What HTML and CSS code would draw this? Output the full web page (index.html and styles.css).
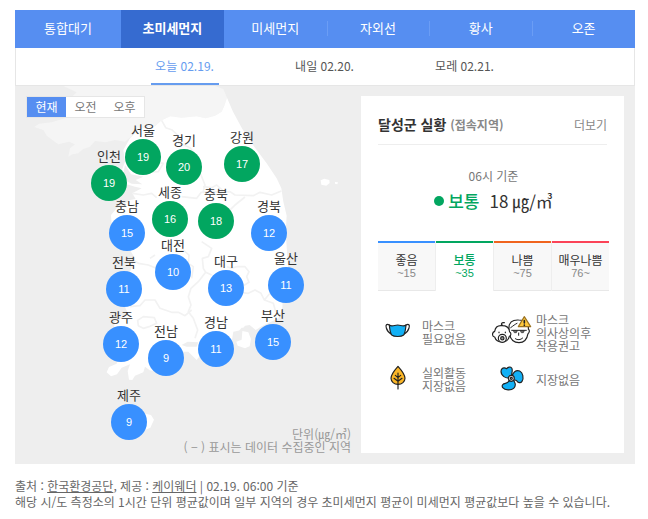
FILE: index.html
```html
<!DOCTYPE html>
<html lang="ko">
<head>
<meta charset="utf-8">
<meta name="viewport" content="width=device-width, initial-scale=1">
<title>초미세먼지</title>
<link rel="stylesheet" href="styles.css">
</head>
<body>
<main class="air">
  <nav class="tabs">
    <a class="tab" href="#all">통합대기</a>
    <a class="tab is-active" href="#pm25" aria-current="page">초미세먼지</a>
    <a class="tab" href="#pm10">미세먼지</a>
    <a class="tab divided" href="#uv">자외선</a>
    <a class="tab divided" href="#dust">황사</a>
    <a class="tab divided" href="#ozone">오존</a>
  </nav>
  <nav class="days">
    <a class="day is-active" href="#today">오늘 02.19.</a>
    <a class="day" href="#tomorrow">내일 02.20.</a>
    <a class="day" href="#after">모레 02.21.</a>
  </nav>

  <div class="board">
    <section class="map">
      <svg class="land" width="346" height="378" viewBox="0 3 1038 1134" aria-hidden="true">
        <path fill="#f5f5f5" d="M145 3H600L625 12L636 38L628 62L620 80L600 92L572 100L545 94L500 98L466 94L440 106L420 124L395 125L370 135L348 155L330 170L300 165L272 172L240 168L225 185L205 192L190 205L172 208L160 215L165 190L180 178L162 170L130 178L112 165L95 152L85 135L58 126L72 116L110 112L150 100L178 75L160 45L185 22Z"/>
        <path fill="#fff" d="M636 38L654 80L682 132L720 188L755 235L785 280L799 310L805 350L815 392L812 440L816 500L820 560L805 600L802 670L790 700L740 724L722 735L704 720L690 722L680 735L655 740L650 770L610 790L560 805L545 825L520 800L500 800L482 770L468 830L430 860L404 856L390 845L385 862L360 872L352 885L342 884L338 858L345 838L320 848L306 868L288 874L275 862L282 846L305 836L310 800L290 770L300 710L340 690L330 665L310 640L325 590L345 560L360 520L345 495L310 470L290 420L288 390L305 370L325 360L345 345L362 342L352 325L380 310L360 305L330 296L315 270L330 230L325 195L345 160L370 135L395 125L420 124L440 106L466 94L500 98L545 94L572 100L600 92L620 80L628 62Z"/>
        <path fill="#eee" d="M330 240L348 268L385 275L362 285L382 298L350 296L322 282ZM655 745L672 738L680 728L698 728L706 742L694 755L675 752L662 765ZM500 780L518 770L550 772L545 785L515 785Z"/>
        <path fill="#fff" d="M682 738L700 742L708 762L704 784L690 790L668 782L664 770L680 764ZM390 986L408 990L417 1004L406 1028L388 1036ZM917 286L928 281L943 285L944 294L934 302L919 299ZM960 291L969 292L967 298L960 296Z"/>
        <g fill="none" stroke="#f2f2f2" stroke-width="5" stroke-linejoin="round">
          <path d="M440 106L452 128L470 134L488 150L492 174L525 188L538 205L530 240L558 270L570 300L564 322L590 318L612 322L645 320L660 330L715 332L735 322L770 330L799 318"/>
          <path d="M564 305L590 308L605 300L622 315L615 330M352 325L385 330L410 325L425 338M500 335L545 340L560 320M690 336L660 360L640 380M560 470L590 490L580 515L562 520L565 550L572 562L550 590L528 610L520 635L528 660L520 680L535 700L548 735L540 760"/>
          <path d="M345 520L370 535L400 540L420 548L430 535M572 562L590 570M636 545L650 550L665 545L690 545L702 560L695 575L702 592L685 602L672 622L700 625L720 615L738 625L748 645L775 655L782 680M748 645L765 625L790 632M345 665L375 662L390 645L420 645L435 670L470 682L490 682L510 692L530 675M368 706L385 695L418 698L425 715L405 724L385 730L370 722ZM480 500L505 495L522 510L520 535L535 545L530 580M405 520L420 510M330 220L360 250L375 262L430 260L445 235L415 230"/>
        </g>
      </svg>

      <div class="periods">
        <button class="period is-active" type="button">현재</button>
        <button class="period" type="button">오전</button>
        <button class="period" type="button">오후</button>
      </div>

      <ul class="cities">
        <li class="city normal-level seoul">서울<b class="value">19</b></li>
        <li class="city normal-level gyeonggi">경기<b class="value">20</b></li>
        <li class="city normal-level gangwon">강원<b class="value">17</b></li>
        <li class="city normal-level incheon">인천<b class="value">19</b></li>
        <li class="city normal-level sejong">세종<b class="value">16</b></li>
        <li class="city normal-level chungbuk">충북<b class="value">18</b></li>
        <li class="city chungnam">충남<b class="value">15</b></li>
        <li class="city gyeongbuk">경북<b class="value">12</b></li>
        <li class="city daejeon">대전<b class="value">10</b></li>
        <li class="city daegu">대구<b class="value">13</b></li>
        <li class="city ulsan">울산<b class="value">11</b></li>
        <li class="city jeonbuk">전북<b class="value">11</b></li>
        <li class="city gwangju">광주<b class="value">12</b></li>
        <li class="city jeonnam">전남<b class="value">9</b></li>
        <li class="city gyeongnam">경남<b class="value">11</b></li>
        <li class="city busan">부산<b class="value">15</b></li>
        <li class="city jeju">제주<b class="value">9</b></li>
      </ul>

      <p class="note">단위(㎍/㎥)<br>( − ) 표시는 데이터 수집중인 지역</p>
    </section>

    <section class="card">
      <header class="card-head">
        <h2 class="place">달성군 실황 <span class="here">(접속지역)</span></h2>
        <a class="more" href="#more">더보기</a>
      </header>
      <p class="time">06시 기준</p>
      <p class="status"><span class="dot"></span><strong class="grade">보통</strong><span>18 ㎍/㎥</span></p>

      <ul class="tiers">
        <li class="tier low">좋음<span class="range">~15</span></li>
        <li class="tier normal is-active">보통<span class="range">~35</span></li>
        <li class="tier bad">나쁨<span class="range">~75</span></li>
        <li class="tier worst">매우나쁨<span class="range">76~</span></li>
      </ul>

      <ul class="tips">
        <li class="tip">
          <svg class="icon" viewBox="24 36 120 120" aria-hidden="true">
            <g fill="none" stroke="#222" stroke-width="3.5" stroke-linejoin="round" stroke-linecap="round">
              <path d="M58 75C50 70 46 75 49 84C51 93 57 98 64 103M108 75C116 70 120 75 117 84C115 93 109 98 102 103"/>
              <path fill="#12b0f5" d="M58 75C65 81 74 75 83 75C92 75 101 81 108 75C107 88 105 98 101 105C94 111 72 111 65 105C61 98 59 88 58 75Z"/>
            </g>
          </svg>
          <span>마스크<br>필요없음</span>
        </li>
        <li class="tip">
          <svg class="icon" viewBox="21 36 120 120" aria-hidden="true">
            <g fill="#fff" stroke="#222" stroke-width="3.5" stroke-linejoin="round" stroke-linecap="round">
              <path d="M72 89C70 66 82 59 101 60C121 60 132 70 130 88C135 90 133 99 129 101C126 119 115 128 102 128C88 128 77 119 74 104"/>
              <path fill="none" stroke-width="3" d="M77 83C84 78 91 72 96 70M80 91H124M91 116C97 121 107 120 113 114M101 99V106"/>
              <path fill="#777" stroke-width="2" d="M86 92H97L94 98H89ZM107 92H118L115 98H110Z"/>
              <path d="M29 94C31 81 41 76 51 77C64 77 73 84 74 96C79 98 79 107 73 109C70 121 62 126 51 126C40 126 32 120 29 111C21 110 20 97 29 94Z"/>
              <path fill="none" d="M53 76C47 74 48 67 58 68M42 96V98M61 96V98"/>
              <circle cx="52" cy="115" r="12"/>
              <circle cx="52" cy="115" r="5" fill="#999"/>
              <path fill="#ffc83c" stroke="#9b7220" d="M118 50L137 80H100Z"/>
              <path fill="none" stroke-width="5" d="M118 62V69M118 75V75.5"/>
            </g>
          </svg>
          <span>마스크<br>의사상의후<br>착용권고</span>
        </li>
        <li class="tip">
          <svg class="icon" viewBox="24 177 120 120" aria-hidden="true">
            <g fill="none" stroke="#222" stroke-width="3.5" stroke-linejoin="round" stroke-linecap="round">
              <path fill="#fbb627" d="M84 199C94 210 105 224 105 235C105 245 96 253 84 253C72 253 63 245 63 235C63 224 74 210 84 199Z"/>
              <path d="M84 219V267M84 233L76 226M84 233L92 226M84 244L72 235M84 244L96 235"/>
            </g>
          </svg>
          <span>실외활동<br>지장없음</span>
        </li>
        <li class="tip">
          <svg class="icon" viewBox="21 177 120 120" aria-hidden="true">
            <g fill="#12b0f5" stroke="#222" stroke-width="3.5" stroke-linejoin="round">
              <path d="M75 233C62 237 48 227 48 214C48 204 57 201 65 206C69 201 76 199 80 204C85 211 78 222 80 230Z"/>
              <path d="M82 230C82 217 93 209 104 213C114 218 117 234 111 244C107 251 98 248 95 242C91 238 85 242 81 237Z"/>
              <path d="M80 238C92 243 94 258 86 265C78 272 60 271 53 263C49 256 54 251 61 250C70 249 72 243 77 238Z"/>
              <circle cx="79" cy="235" r="9" fill="#ddd"/>
              <circle cx="79" cy="235" r="3" fill="#fff"/>
            </g>
          </svg>
          <span>지장없음</span>
        </li>
      </ul>
    </section>
  </div>

  <footer class="source">
    출처 : <a href="#keco">한국환경공단</a>, 제공 : <a href="#kweather">케이웨더</a> | 02.19. 06:00 기준<br>
    해당 시/도 측정소의 1시간 단위 평균값이며 일부 지역의 경우 초미세먼지 평균이 미세먼지 평균값보다 높을 수 있습니다.
  </footer>
</main>
</body>
</html>
```
FILE: styles.css
```css
* { box-sizing: border-box; }

body {
  margin: 0;
  background: #fff;
  color: #333;
  font: 13px/16px "Noto Sans CJK KR", sans-serif;
}

a { color: inherit; text-decoration: none; }
ul { margin: 0; padding: 0; list-style: none; }
p, h2 { margin: 0; }

.air { padding: 10px 13px 0 15px; }

.tabs { display: flex; background: #568ef1; color: #fff; }
.tab {
  position: relative;
  flex: 1;
  height: 38px;
  line-height: 36px;
  text-align: center;
}
.tab:first-child { flex: 0 0 106px; }
.tab.is-active { background: #366bd0; font-weight: 700; }
.tab.divided::before {
  content: "";
  position: absolute;
  left: 0;
  top: 11px;
  width: 1px;
  height: 15px;
  background: #6b9df5;
}

.days {
  display: flex;
  justify-content: center;
  gap: 72px;
  padding-right: 1px;
  border: 1px solid #e6e6e6;
  border-top: 0;
  font-size: 12px;
  color: #555;
}
.day {
  width: 68px;
  height: 37px;
  line-height: 36px;
  text-align: center;
  white-space: nowrap;
}
.day.is-active { border-bottom: 2px solid #669cef; color: #669cef; }

.board { display: flex; background: #eee; }
.map {
  position: relative;
  flex: 1;
  display: flex;
  flex-direction: column;
  align-items: flex-start;
  min-width: 346px;
  padding: 10px;
}
.land { position: absolute; left: 0; top: 0; }

.periods {
  position: relative;
  display: flex;
  margin-left: 1px;
  border: 1px solid #e6e6e6;
  background: #fff;
}
.period {
  width: 39px;
  height: 20px;
  padding: 0;
  border: 0;
  background: none;
  color: #777;
  font: 12px/16px "Noto Sans CJK KR", sans-serif;
}
.period.is-active { background: #568ef1; color: #fff; }

.city {
  position: absolute;
  width: 36px;
  line-height: 18px;
  text-align: center;
}
.value {
  display: block;
  border-radius: 50%;
  background: #3890ff;
  color: #fff;
  font: 11px/36px "Liberation Sans", sans-serif;
}
.normal-level .value { background: #02a660; }

.seoul { left: 110px; top: 35px; }
.gyeonggi { left: 151px; top: 45px; }
.gangwon { left: 209px; top: 42px; }
.incheon { left: 76px; top: 61px; }
.sejong { left: 137px; top: 97px; }
.chungbuk { left: 183px; top: 99px; }
.chungnam { left: 94px; top: 111px; }
.gyeongbuk { left: 236px; top: 111px; }
.daejeon { left: 140px; top: 150px; }
.daegu { left: 193px; top: 166px; }
.ulsan { left: 253px; top: 163px; }
.jeonbuk { left: 91px; top: 167px; }
.gwangju { left: 88px; top: 222px; }
.jeonnam { left: 133px; top: 236px; }
.gyeongnam { left: 183px; top: 227px; }
.busan { left: 240px; top: 220px; }
.jeju { left: 96px; top: 300px; }

.map .note {
  position: relative;
  margin-top: auto;
  align-self: flex-end;
  padding-bottom: 1px;
  color: #999;
  font-size: 12px;
  line-height: 13px;
  text-align: right;
}

.card {
  width: 263px;
  margin: 10px 11px 11px 0;
  padding: 0 15px 54px 17px;
  background: #fff;
}
.card-head {
  display: flex;
  justify-content: space-between;
  align-items: center;
  margin-right: 2px;
  padding: 20px 0 11px;
  border-bottom: 1px solid #eee;
}
.place { font-size: 14px; line-height: 16px; }
.here { color: #888; font-size: 12px; }
.more { color: #888; font-size: 12px; }
.time { margin-top: 21px; color: #777; font-size: 12px; line-height: 20px; text-align: center; }
.status {
  display: flex;
  justify-content: center;
  align-items: center;
  margin: 3px 0 28px;
  font-size: 17px;
  line-height: 24px;
}
.dot { width: 10px; height: 10px; margin-right: 4px; border-radius: 50%; background: #02a660; }
.grade { margin-right: 10px; color: #02a660; font-weight: 500; }

.tiers { display: grid; grid-template-columns: repeat(4, 1fr); gap: 1px; }
.tier {
  height: 50px;
  padding-top: 10px;
  border-top: 2px solid;
  border-bottom: 1px solid #e8e8e8;
  background: #f8f8f8;
  box-shadow: 1px 0 #eee;
  font-size: 12px;
  line-height: 14px;
  text-align: center;
  white-space: nowrap;
}
.tier.low { border-top-color: #3890ff; }
.tier.normal { border-top-color: #02a660; }
.tier.bad { border-top-color: #f0641e; }
.tier.worst { border-top-color: #fb4357; box-shadow: none; }
.tier.is-active { border-bottom-color: #fff; background: #fff; color: #02a660; font-weight: 500; }
.range { display: block; color: #888; font: 11px/13px "Liberation Sans", sans-serif; }
.is-active .range { color: #02a660; }

.tips {
  display: grid;
  grid-template-columns: 114px 1fr;
  grid-auto-rows: 40px;
  row-gap: 7px;
  margin-top: 21px;
  color: #777;
  font-size: 12px;
  line-height: 13px;
}
.tip { display: flex; align-items: center; gap: 4px; white-space: nowrap; }
.icon { flex: none; width: 40px; height: 40px; }

.source { margin-top: 14px; color: #666; font-size: 12px; line-height: 16px; }
.source a { text-decoration: underline; }
```
